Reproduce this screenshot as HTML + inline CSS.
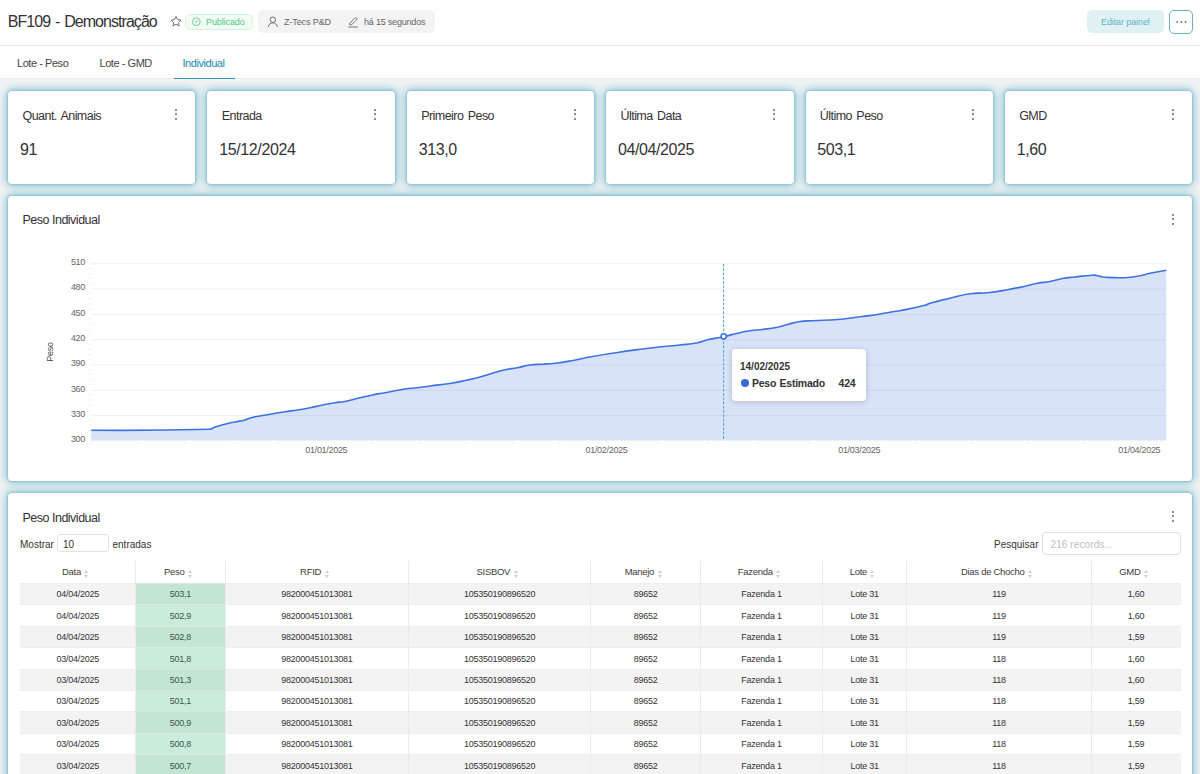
<!DOCTYPE html>
<html><head><meta charset="utf-8">
<style>
*{box-sizing:border-box;margin:0;padding:0}
html,body{width:1200px;height:774px;overflow:hidden;background:#fff;font-family:"Liberation Sans",sans-serif;color:#333}
.a{position:absolute;white-space:nowrap}
#hdr{position:absolute;left:0;top:0;width:1200px;height:46px;background:#fff;border-bottom:1px solid #e6e6e6}
#tabs{position:absolute;left:0;top:46px;width:1200px;height:32px;background:#fff;z-index:2;overflow:visible}
#main{position:absolute;left:0;top:78px;width:1200px;height:696px;background:#f1f3f3;border-top:1px solid #ededed}
.card{position:absolute;background:#fff;border-radius:4px;box-shadow:0 0 2px 1px rgba(90,170,200,.45),0 0 9px 2px rgba(60,160,195,.55)}
.dots{position:absolute;width:2px;height:12px}
.dots i{position:absolute;left:0.1px;width:2px;height:2px;background:#666;border-radius:50%}
.ctitle{position:absolute;font-size:12.5px;color:#333;letter-spacing:-0.55px;word-spacing:1.5px}
.cval{position:absolute;font-size:16px;color:#333;letter-spacing:-0.4px}
.th{display:flex;align-items:center;justify-content:center;padding-right:4px;padding-bottom:1.5px;font-size:9.5px;color:#3d3d3d;letter-spacing:-0.3px}
.si{position:relative;display:inline-block;width:5px;height:8px;margin-left:3.5px;top:3px}
.si:before{content:"";position:absolute;left:0;top:0;border-left:2.5px solid transparent;border-right:2.5px solid transparent;border-bottom:3px solid #cfcfcf}
.si:after{content:"";position:absolute;left:0;top:4.5px;border-left:2.5px solid transparent;border-right:2.5px solid transparent;border-top:3px solid #cfcfcf}
.td{text-align:center;font-size:9px;color:#333;letter-spacing:-0.25px}
.g{color:#3a5847}
</style></head><body>
<div id="hdr">
  <div class="a" style="left:7.8px;top:11px;font-size:16px;line-height:22px;color:#333;letter-spacing:-0.95px;word-spacing:1.3px">BF109 - Demonstração</div>
  <svg class="a" style="left:169px;top:15px" width="14" height="13" viewBox="0 0 14 13"><path d="M7.05 1.50 L8.58 4.60 L12.00 5.09 L9.52 7.50 L10.11 10.91 L7.05 9.30 L3.99 10.91 L4.58 7.50 L2.10 5.09 L5.52 4.60 Z" fill="none" stroke="#6e6e6e" stroke-width="1" stroke-linejoin="round"/></svg>
  <div class="a" style="left:185px;top:14px;width:68px;height:16px;border:1px solid #d3f2de;background:#f0fcf4;border-radius:5px"></div>
  <svg class="a" style="left:191px;top:16px" width="11" height="11" viewBox="0 0 11 11"><circle cx="5.3" cy="5.7" r="3.9" fill="none" stroke="#72cf9a" stroke-width="1"/><path d="M3.9 5.7 L4.9 6.5 L6.6 4.5" fill="none" stroke="#72cf9a" stroke-width="1" stroke-linecap="round" stroke-linejoin="round"/></svg>
  <div class="a" style="left:206px;top:16px;font-size:9px;line-height:12px;color:#55c585;letter-spacing:-0.1px">Publicado</div>
  <div class="a" style="left:258px;top:10px;width:177px;height:23px;background:#f3f3f3;border-radius:5px"></div>
  <svg class="a" style="left:266px;top:16px" width="14" height="12" viewBox="0 0 14 12"><circle cx="6.85" cy="3.75" r="2.75" fill="none" stroke="#707070" stroke-width="1"/><path d="M2.3 10.6 C2.9 8.2 4.6 6.8 6.85 6.8 C9.1 6.8 10.8 8.2 11.4 10.6" fill="none" stroke="#707070" stroke-width="1" stroke-linecap="round"/></svg>
  <div class="a" style="left:284px;top:16px;font-size:9px;line-height:12px;color:#666;letter-spacing:-0.1px">Z-Tecs P&amp;D</div>
  <svg class="a" style="left:347px;top:15.5px" width="12" height="13" viewBox="0 0 12 13"><path d="M2.7 8.9 L2.9 7.1 L7.9 2.1 Q8.8 1.3 9.6 2.1 Q10.4 2.9 9.6 3.8 L4.6 8.8 Z" fill="none" stroke="#777" stroke-width="1" stroke-linejoin="round"/><path d="M1.2 11 H10.8" stroke="#7a7a7a" stroke-width="1"/></svg>
  <div class="a" style="left:364px;top:16px;font-size:9px;line-height:12px;color:#666;letter-spacing:-0.2px">há 15 segundos</div>
  <div class="a" style="left:1087px;top:10px;width:77px;height:23px;background:#e1f0f2;border-radius:5px"></div>
  <div class="a" style="left:1101px;top:16px;font-size:9px;line-height:12px;color:#5eb3ca;letter-spacing:-0.1px">Editar painel</div>
  <div class="a" style="left:1169px;top:10px;width:24px;height:24px;border:1px solid #6cadc5;border-radius:5px;background:#fff"></div>
  <svg class="a" style="left:1170px;top:14px" width="22" height="16" viewBox="1170 14 22 16"><circle cx="1177.2" cy="22" r="0.95" fill="#3f7d98"/><circle cx="1181.35" cy="22" r="0.95" fill="#3f7d98"/><circle cx="1185.5" cy="22" r="0.95" fill="#3f7d98"/></svg>
</div>
<div id="tabs">
  <div class="a" style="left:17px;top:10px;font-size:11px;line-height:14px;color:#444;letter-spacing:-0.45px">Lote - Peso</div>
  <div class="a" style="left:99.5px;top:10px;font-size:11px;line-height:14px;color:#444;letter-spacing:-0.45px">Lote - GMD</div>
  <div class="a" style="left:182.5px;top:10px;font-size:11px;line-height:14px;color:#2189ab;letter-spacing:-0.45px">Individual</div>
  <div class="a" style="left:174px;top:31.6px;width:61px;height:1.7px;background:#2f97b6"></div>
</div>
<div id="main"></div>

<!-- KPI cards -->
<div class="card" style="left:7.80px;top:91px;width:187.45px;height:93px"></div>
<div class="card" style="left:207.25px;top:91px;width:187.45px;height:93px"></div>
<div class="card" style="left:406.70px;top:91px;width:187.45px;height:93px"></div>
<div class="card" style="left:606.15px;top:91px;width:187.45px;height:93px"></div>
<div class="card" style="left:805.60px;top:91px;width:187.45px;height:93px"></div>
<div class="card" style="left:1005.05px;top:91px;width:187.45px;height:93px"></div>

<div class="a ctitle" style="left:22.50px;top:108.5px;line-height:15px">Quant. Animais</div>
<div class="a cval" style="left:20.00px;top:140.5px;line-height:18px">91</div>
<div class="dots" style="left:175.00px;top:108.5px"><i style="top:0"></i><i style="top:4.65px"></i><i style="top:9.3px"></i></div>
<div class="a ctitle" style="left:221.83px;top:108.5px;line-height:15px">Entrada</div>
<div class="a cval" style="left:219.33px;top:140.5px;line-height:18px">15/12/2024</div>
<div class="dots" style="left:374.33px;top:108.5px"><i style="top:0"></i><i style="top:4.65px"></i><i style="top:9.3px"></i></div>
<div class="a ctitle" style="left:421.17px;top:108.5px;line-height:15px">Primeiro Peso</div>
<div class="a cval" style="left:418.67px;top:140.5px;line-height:18px">313,0</div>
<div class="dots" style="left:573.67px;top:108.5px"><i style="top:0"></i><i style="top:4.65px"></i><i style="top:9.3px"></i></div>
<div class="a ctitle" style="left:620.50px;top:108.5px;line-height:15px">Última Data</div>
<div class="a cval" style="left:618.00px;top:140.5px;line-height:18px">04/04/2025</div>
<div class="dots" style="left:773.00px;top:108.5px"><i style="top:0"></i><i style="top:4.65px"></i><i style="top:9.3px"></i></div>
<div class="a ctitle" style="left:819.83px;top:108.5px;line-height:15px">Último Peso</div>
<div class="a cval" style="left:817.33px;top:140.5px;line-height:18px">503,1</div>
<div class="dots" style="left:972.33px;top:108.5px"><i style="top:0"></i><i style="top:4.65px"></i><i style="top:9.3px"></i></div>
<div class="a ctitle" style="left:1019.16px;top:108.5px;line-height:15px">GMD</div>
<div class="a cval" style="left:1016.66px;top:140.5px;line-height:18px">1,60</div>
<div class="dots" style="left:1171.66px;top:108.5px"><i style="top:0"></i><i style="top:4.65px"></i><i style="top:9.3px"></i></div>
<!-- chart card -->
<div class="card" style="left:7.8px;top:196px;width:1184.7px;height:285px"></div>
<svg class="a" style="left:0;top:0;font-family:'Liberation Sans',sans-serif" width="1200" height="774" viewBox="0 0 1200 774">
<path d="M91.2 415.6 H1166.3" stroke="#f0f0f0" stroke-width="1"/>
<path d="M91.2 390.3 H1166.3" stroke="#f0f0f0" stroke-width="1"/>
<path d="M91.2 365 H1166.3" stroke="#f0f0f0" stroke-width="1"/>
<path d="M91.2 339.7 H1166.3" stroke="#f0f0f0" stroke-width="1"/>
<path d="M91.2 314.4 H1166.3" stroke="#f0f0f0" stroke-width="1"/>
<path d="M91.2 289.1 H1166.3" stroke="#f0f0f0" stroke-width="1"/>
<path d="M91.2 263.8 H1166.3" stroke="#f0f0f0" stroke-width="1"/>
<path d="M88.5 435.34 H92 M88.5 430.28 H92 M88.5 425.22 H92 M88.5 420.16 H92 M88.5 410.04 H92 M88.5 404.98 H92 M88.5 399.92 H92 M88.5 394.86 H92 M88.5 384.74 H92 M88.5 379.68 H92 M88.5 374.62 H92 M88.5 369.56 H92 M88.5 359.44 H92 M88.5 354.38 H92 M88.5 349.32 H92 M88.5 344.26 H92 M88.5 334.14 H92 M88.5 329.08 H92 M88.5 324.02 H92 M88.5 318.96 H92 M88.5 308.84 H92 M88.5 303.78 H92 M88.5 298.72 H92 M88.5 293.66 H92 M88.5 283.54 H92 M88.5 278.48 H92 M88.5 273.42 H92 M88.5 268.36 H92" stroke="#f3f3f3" stroke-width="1"/>
<path d="M91.2 440.4 V444 M138.25 440.4 V444 M185 440.4 V444 M232 440.4 V444 M278.75 440.4 V444 M325.75 440.4 V444 M372.58 440.4 V444 M419.41 440.4 V444 M466.24 440.4 V444 M513.07 440.4 V444 M559.9 440.4 V444 M606.7 440.4 V444 M657.24 440.4 V444 M707.78 440.4 V444 M758.32 440.4 V444 M808.86 440.4 V444 M859.9 440.4 V444 M916 440.4 V444 M972.1 440.4 V444 M1028.2 440.4 V444 M1084.3 440.4 V444 M1140.4 440.4 V444 M1148.9 440.4 V444 M1156.5 440.4 V444 M1161.6 440.4 V444" stroke="#f2f2f2" stroke-width="1"/>
<path d="M91.25 430.2 C91.25 430.2 150.86 430.75 210 429.2 C212.73 429.13 212.41 427.81 215 426.95 C219.91 425.31 219.97 425.46 225 424.2 C229.97 422.96 229.99 423.02 235 421.95 C239.99 420.89 240.08 421.24 245 419.95 C248.2 419.11 248.05 418.55 251.25 417.7 C255.55 416.55 255.62 416.78 260 415.95 C266.24 414.78 266.24 414.76 272.5 413.7 C278.74 412.64 278.74 412.64 285 411.7 C291.24 410.76 291.27 410.95 297.5 409.95 C303.77 408.95 303.77 408.95 310 407.7 C316.27 406.45 316.23 406.2 322.5 404.95 C328.73 403.7 328.73 403.68 335 402.7 C339.98 401.93 340.07 402.44 345 401.45 C352.57 399.94 352.48 399.48 360 397.7 C366.23 396.23 366.23 396.2 372.5 394.95 C378.73 393.7 378.76 393.85 385 392.7 C395.01 390.85 394.95 390.5 405 388.95 C411.2 388 411.26 388.45 417.5 387.7 C423.76 386.95 423.74 386.77 430 385.95 C439.99 384.64 440.06 385.04 450 383.45 C458.81 382.04 458.78 381.84 467.5 379.95 C473.78 378.59 473.8 378.62 480 376.95 C486.3 375.25 486.23 375.02 492.5 373.2 C498.73 371.39 498.67 371.09 505 369.7 C511.17 368.34 511.28 368.88 517.5 367.7 C523.78 366.51 523.68 365.83 530 364.95 C536.18 364.08 536.25 364.64 542.5 364.2 C548.75 363.76 548.78 363.94 555 363.2 C562.53 362.31 562.54 362.29 570 360.95 C581.29 358.92 581.21 358.47 592.5 356.45 C604.96 354.22 604.98 354.33 617.5 352.45 C629.98 350.58 629.99 350.62 642.5 348.95 C648.74 348.12 648.74 348.12 655 347.45 C667.49 346.12 667.52 346.35 680 344.95 C688.77 343.97 688.86 344.35 697.5 342.7 C702.61 341.72 702.42 340.86 707.5 339.7 C715.54 337.86 715.68 338.45 723.75 336.7 C730.68 335.2 730.59 334.78 737.5 333.2 C743.71 331.78 743.7 331.64 750 330.7 C756.2 329.77 756.27 330.24 762.5 329.45 C770.02 328.49 770.08 328.68 777.5 327.2 C782.58 326.18 782.48 325.73 787.5 324.45 C793.73 322.86 793.67 322.4 800 321.45 C806.17 320.52 806.25 321.03 812.5 320.7 C825 320.03 825.04 320.51 837.5 319.45 C850.04 318.38 850.01 318.01 862.5 316.45 C870.01 315.51 870.03 315.63 877.5 314.45 C885.03 313.26 884.98 312.95 892.5 311.7 C896.23 311.08 896.29 311.44 900 310.7 C912.54 308.19 912.61 308.3 925 305.2 C927.61 304.55 927.41 303.92 930 303.2 C939.91 300.42 939.97 300.58 950 298.2 C959.97 295.83 959.89 295.18 970 293.7 C978.64 292.43 978.79 293.63 987.5 292.7 C997.54 291.63 997.54 291.43 1007.5 289.7 C1016.29 288.18 1016.28 288.09 1025 286.2 C1031.28 284.84 1031.19 284.4 1037.5 283.2 C1043.69 282.02 1043.81 282.63 1050 281.45 C1056.31 280.25 1056.18 279.59 1062.5 278.45 C1068.68 277.34 1068.74 277.63 1075 276.95 C1083.74 276 1083.75 275.69 1092.5 275.2 C1095 275.06 1095.03 275.27 1097.5 275.7 C1100.03 276.14 1099.94 276.76 1102.5 276.95 C1113.69 277.76 1113.79 278.07 1125 277.7 C1132.54 277.45 1132.56 277.04 1140 275.7 C1145.06 274.79 1144.96 274.26 1150 273.2 C1158.08 271.51 1166.25 270.2 1166.25 270.2 L1166.25 440.4 L91.25 440.4 Z" fill="rgba(59,111,224,.2)"/>
<path d="M91.25 430.2 C91.25 430.2 150.86 430.75 210 429.2 C212.73 429.13 212.41 427.81 215 426.95 C219.91 425.31 219.97 425.46 225 424.2 C229.97 422.96 229.99 423.02 235 421.95 C239.99 420.89 240.08 421.24 245 419.95 C248.2 419.11 248.05 418.55 251.25 417.7 C255.55 416.55 255.62 416.78 260 415.95 C266.24 414.78 266.24 414.76 272.5 413.7 C278.74 412.64 278.74 412.64 285 411.7 C291.24 410.76 291.27 410.95 297.5 409.95 C303.77 408.95 303.77 408.95 310 407.7 C316.27 406.45 316.23 406.2 322.5 404.95 C328.73 403.7 328.73 403.68 335 402.7 C339.98 401.93 340.07 402.44 345 401.45 C352.57 399.94 352.48 399.48 360 397.7 C366.23 396.23 366.23 396.2 372.5 394.95 C378.73 393.7 378.76 393.85 385 392.7 C395.01 390.85 394.95 390.5 405 388.95 C411.2 388 411.26 388.45 417.5 387.7 C423.76 386.95 423.74 386.77 430 385.95 C439.99 384.64 440.06 385.04 450 383.45 C458.81 382.04 458.78 381.84 467.5 379.95 C473.78 378.59 473.8 378.62 480 376.95 C486.3 375.25 486.23 375.02 492.5 373.2 C498.73 371.39 498.67 371.09 505 369.7 C511.17 368.34 511.28 368.88 517.5 367.7 C523.78 366.51 523.68 365.83 530 364.95 C536.18 364.08 536.25 364.64 542.5 364.2 C548.75 363.76 548.78 363.94 555 363.2 C562.53 362.31 562.54 362.29 570 360.95 C581.29 358.92 581.21 358.47 592.5 356.45 C604.96 354.22 604.98 354.33 617.5 352.45 C629.98 350.58 629.99 350.62 642.5 348.95 C648.74 348.12 648.74 348.12 655 347.45 C667.49 346.12 667.52 346.35 680 344.95 C688.77 343.97 688.86 344.35 697.5 342.7 C702.61 341.72 702.42 340.86 707.5 339.7 C715.54 337.86 715.68 338.45 723.75 336.7 C730.68 335.2 730.59 334.78 737.5 333.2 C743.71 331.78 743.7 331.64 750 330.7 C756.2 329.77 756.27 330.24 762.5 329.45 C770.02 328.49 770.08 328.68 777.5 327.2 C782.58 326.18 782.48 325.73 787.5 324.45 C793.73 322.86 793.67 322.4 800 321.45 C806.17 320.52 806.25 321.03 812.5 320.7 C825 320.03 825.04 320.51 837.5 319.45 C850.04 318.38 850.01 318.01 862.5 316.45 C870.01 315.51 870.03 315.63 877.5 314.45 C885.03 313.26 884.98 312.95 892.5 311.7 C896.23 311.08 896.29 311.44 900 310.7 C912.54 308.19 912.61 308.3 925 305.2 C927.61 304.55 927.41 303.92 930 303.2 C939.91 300.42 939.97 300.58 950 298.2 C959.97 295.83 959.89 295.18 970 293.7 C978.64 292.43 978.79 293.63 987.5 292.7 C997.54 291.63 997.54 291.43 1007.5 289.7 C1016.29 288.18 1016.28 288.09 1025 286.2 C1031.28 284.84 1031.19 284.4 1037.5 283.2 C1043.69 282.02 1043.81 282.63 1050 281.45 C1056.31 280.25 1056.18 279.59 1062.5 278.45 C1068.68 277.34 1068.74 277.63 1075 276.95 C1083.74 276 1083.75 275.69 1092.5 275.2 C1095 275.06 1095.03 275.27 1097.5 275.7 C1100.03 276.14 1099.94 276.76 1102.5 276.95 C1113.69 277.76 1113.79 278.07 1125 277.7 C1132.54 277.45 1132.56 277.04 1140 275.7 C1145.06 274.79 1144.96 274.26 1150 273.2 C1158.08 271.51 1166.25 270.2 1166.25 270.2" fill="none" stroke="#3f72e0" stroke-width="1.65" stroke-linejoin="round"/>
<text x="85" y="442.2" text-anchor="end" font-size="9" fill="#666" letter-spacing="-0.3">300</text>
<text x="85" y="416.9" text-anchor="end" font-size="9" fill="#666" letter-spacing="-0.3">330</text>
<text x="85" y="391.6" text-anchor="end" font-size="9" fill="#666" letter-spacing="-0.3">360</text>
<text x="85" y="366.3" text-anchor="end" font-size="9" fill="#666" letter-spacing="-0.3">390</text>
<text x="85" y="341" text-anchor="end" font-size="9" fill="#666" letter-spacing="-0.3">420</text>
<text x="85" y="315.7" text-anchor="end" font-size="9" fill="#666" letter-spacing="-0.3">450</text>
<text x="85" y="290.4" text-anchor="end" font-size="9" fill="#666" letter-spacing="-0.3">480</text>
<text x="85" y="265.1" text-anchor="end" font-size="9" fill="#666" letter-spacing="-0.3">510</text>
<text x="326.3" y="453" text-anchor="middle" font-size="9" fill="#666" letter-spacing="-0.3">01/01/2025</text>
<text x="606.5" y="453" text-anchor="middle" font-size="9" fill="#666" letter-spacing="-0.3">01/02/2025</text>
<text x="859.2" y="453" text-anchor="middle" font-size="9" fill="#666" letter-spacing="-0.3">01/03/2025</text>
<text x="1139.3" y="453" text-anchor="middle" font-size="9" fill="#666" letter-spacing="-0.3">01/04/2025</text>
<text transform="translate(53 352) rotate(-90)" text-anchor="middle" font-size="9" fill="#444" letter-spacing="-0.3">Peso</text>
<path d="M723.6 264 V440.4" stroke="#4aa8c6" stroke-width="1" stroke-dasharray="2.8 1.5"/>
<circle cx="723.65" cy="336.3" r="2.6" fill="#fff" stroke="#3a6ee0" stroke-width="1.5"/>
</svg>
<div class="a" style="left:22.5px;top:213px;font-size:12.5px;line-height:15px;color:#333;letter-spacing:-0.5px">Peso Individual</div>
<div class="dots" style="left:1172px;top:213.5px"><i style="top:0"></i><i style="top:4.65px"></i><i style="top:9.3px"></i></div>
<div class="a" style="left:732px;top:349px;width:134px;height:52px;background:#fff;border-radius:4px;box-shadow:0 1px 6px rgba(0,0,0,.18)"></div>
<div class="a" style="left:740px;top:359.75px;font-size:10px;line-height:13px;font-weight:bold;color:#333">14/02/2025</div>
<div class="a" style="left:741px;top:379px;width:8px;height:8px;border-radius:50%;background:#3b68d6"></div>
<div class="a" style="left:752px;top:376.75px;font-size:10.5px;line-height:13px;font-weight:bold;color:#333;letter-spacing:-0.25px;word-spacing:0.8px">Peso Estimado</div>
<div class="a" style="left:838.5px;top:376.75px;font-size:10.5px;line-height:13px;font-weight:bold;color:#333;letter-spacing:-0.2px">424</div>

<!-- table card -->
<div class="card" style="left:7.8px;top:493px;width:1184.7px;height:320px"></div>

<div class="a" style="left:22.5px;top:510.5px;font-size:12.5px;line-height:15px;color:#333;letter-spacing:-0.5px">Peso Individual</div>
<div class="dots" style="left:1172px;top:510.5px"><i style="top:0"></i><i style="top:4.65px"></i><i style="top:9.3px"></i></div>
<div class="a" style="left:20px;top:537.5px;font-size:10px;line-height:13px;color:#333">Mostrar</div>
<div class="a" style="left:57px;top:534px;width:52px;height:17.5px;border:1px solid #e2e2e2;border-radius:3px;background:#fff"></div>
<div class="a" style="left:63px;top:537.5px;font-size:10px;line-height:13px;color:#333">10</div>
<div class="a" style="left:112.5px;top:537.5px;font-size:10px;line-height:13px;color:#333">entradas</div>
<div class="a" style="left:994px;top:537.5px;font-size:10px;line-height:13px;color:#333">Pesquisar</div>
<div class="a" style="left:1042px;top:531.5px;width:139px;height:23px;border:1px solid #e0e0e0;border-radius:4px;background:#fff"></div>
<div class="a" style="left:1050.5px;top:537.5px;font-size:10px;line-height:13px;color:#bdbdbd;letter-spacing:0.1px">216 records...</div>
<div class="a" style="left:20px;top:583.00px;width:1161.00px;height:21.41px;background:#f3f3f3;border-top:1px solid #ededed"></div>
<div class="a" style="left:136.00px;top:583.00px;width:89.40px;height:21.41px;background:#c4e5d4;border-top:1px solid #dbe9e1"></div>
<div class="a" style="left:20px;top:604.41px;width:1161.00px;height:21.41px;background:#ffffff;border-top:1px solid #ededed"></div>
<div class="a" style="left:136.00px;top:604.41px;width:89.40px;height:21.41px;background:#cbebdb;border-top:1px solid #dbe9e1"></div>
<div class="a" style="left:20px;top:625.82px;width:1161.00px;height:21.41px;background:#f3f3f3;border-top:1px solid #ededed"></div>
<div class="a" style="left:136.00px;top:625.82px;width:89.40px;height:21.41px;background:#c4e5d4;border-top:1px solid #dbe9e1"></div>
<div class="a" style="left:20px;top:647.23px;width:1161.00px;height:21.41px;background:#ffffff;border-top:1px solid #ededed"></div>
<div class="a" style="left:136.00px;top:647.23px;width:89.40px;height:21.41px;background:#cbebdb;border-top:1px solid #dbe9e1"></div>
<div class="a" style="left:20px;top:668.64px;width:1161.00px;height:21.41px;background:#f3f3f3;border-top:1px solid #ededed"></div>
<div class="a" style="left:136.00px;top:668.64px;width:89.40px;height:21.41px;background:#c4e5d4;border-top:1px solid #dbe9e1"></div>
<div class="a" style="left:20px;top:690.05px;width:1161.00px;height:21.41px;background:#ffffff;border-top:1px solid #ededed"></div>
<div class="a" style="left:136.00px;top:690.05px;width:89.40px;height:21.41px;background:#cbebdb;border-top:1px solid #dbe9e1"></div>
<div class="a" style="left:20px;top:711.46px;width:1161.00px;height:21.41px;background:#f3f3f3;border-top:1px solid #ededed"></div>
<div class="a" style="left:136.00px;top:711.46px;width:89.40px;height:21.41px;background:#c4e5d4;border-top:1px solid #dbe9e1"></div>
<div class="a" style="left:20px;top:732.87px;width:1161.00px;height:21.41px;background:#ffffff;border-top:1px solid #ededed"></div>
<div class="a" style="left:136.00px;top:732.87px;width:89.40px;height:21.41px;background:#cbebdb;border-top:1px solid #dbe9e1"></div>
<div class="a" style="left:20px;top:754.28px;width:1161.00px;height:21.41px;background:#f3f3f3;border-top:1px solid #ededed"></div>
<div class="a" style="left:136.00px;top:754.28px;width:89.40px;height:21.41px;background:#c4e5d4;border-top:1px solid #dbe9e1"></div>
<div class="a" style="left:20px;top:775.69px;width:1161.00px;height:21.41px;background:#ffffff;border-top:1px solid #ededed"></div>
<div class="a" style="left:136.00px;top:775.69px;width:89.40px;height:21.41px;background:#cbebdb;border-top:1px solid #dbe9e1"></div>
<div class="a" style="left:135.00px;top:561px;width:1px;height:213px;background:#ebebeb"></div>
<div class="a" style="left:224.90px;top:561px;width:1px;height:213px;background:#ebebeb"></div>
<div class="a" style="left:407.80px;top:561px;width:1px;height:213px;background:#ebebeb"></div>
<div class="a" style="left:590.30px;top:561px;width:1px;height:213px;background:#ebebeb"></div>
<div class="a" style="left:700.00px;top:561px;width:1px;height:213px;background:#ebebeb"></div>
<div class="a" style="left:822.00px;top:561px;width:1px;height:213px;background:#ebebeb"></div>
<div class="a" style="left:906.20px;top:561px;width:1px;height:213px;background:#ebebeb"></div>
<div class="a" style="left:1090.75px;top:561px;width:1px;height:213px;background:#ebebeb"></div>
<div class="a th" style="left:20.00px;width:115.50px;top:561px;height:22px"><span>Data</span><b class="si"></b></div>
<div class="a th" style="left:135.50px;width:89.90px;top:561px;height:22px"><span>Peso</span><b class="si"></b></div>
<div class="a th" style="left:225.40px;width:182.90px;top:561px;height:22px"><span>RFID</span><b class="si"></b></div>
<div class="a th" style="left:408.30px;width:182.50px;top:561px;height:22px"><span>SISBOV</span><b class="si"></b></div>
<div class="a th" style="left:590.80px;width:109.70px;top:561px;height:22px"><span>Manejo</span><b class="si"></b></div>
<div class="a th" style="left:700.50px;width:122.00px;top:561px;height:22px"><span>Fazenda</span><b class="si"></b></div>
<div class="a th" style="left:822.50px;width:84.20px;top:561px;height:22px"><span>Lote</span><b class="si"></b></div>
<div class="a th" style="left:906.70px;width:184.55px;top:561px;height:22px"><span>Dias de Chocho</span><b class="si"></b></div>
<div class="a th" style="left:1091.25px;width:89.75px;top:561px;height:22px"><span>GMD</span><b class="si"></b></div>
<div class="a td" style="left:20.00px;width:115.50px;top:584.30px;height:20.41px;line-height:20.41px">04/04/2025</div>
<div class="a td g" style="left:135.50px;width:89.90px;top:584.30px;height:20.41px;line-height:20.41px">503,1</div>
<div class="a td" style="left:225.40px;width:182.90px;top:584.30px;height:20.41px;line-height:20.41px">982000451013081</div>
<div class="a td" style="left:408.30px;width:182.50px;top:584.30px;height:20.41px;line-height:20.41px">105350190896520</div>
<div class="a td" style="left:590.80px;width:109.70px;top:584.30px;height:20.41px;line-height:20.41px">89652</div>
<div class="a td" style="left:700.50px;width:122.00px;top:584.30px;height:20.41px;line-height:20.41px">Fazenda 1</div>
<div class="a td" style="left:822.50px;width:84.20px;top:584.30px;height:20.41px;line-height:20.41px">Lote 31</div>
<div class="a td" style="left:906.70px;width:184.55px;top:584.30px;height:20.41px;line-height:20.41px">119</div>
<div class="a td" style="left:1091.25px;width:89.75px;top:584.30px;height:20.41px;line-height:20.41px">1,60</div>
<div class="a td" style="left:20.00px;width:115.50px;top:605.71px;height:20.41px;line-height:20.41px">04/04/2025</div>
<div class="a td g" style="left:135.50px;width:89.90px;top:605.71px;height:20.41px;line-height:20.41px">502,9</div>
<div class="a td" style="left:225.40px;width:182.90px;top:605.71px;height:20.41px;line-height:20.41px">982000451013081</div>
<div class="a td" style="left:408.30px;width:182.50px;top:605.71px;height:20.41px;line-height:20.41px">105350190896520</div>
<div class="a td" style="left:590.80px;width:109.70px;top:605.71px;height:20.41px;line-height:20.41px">89652</div>
<div class="a td" style="left:700.50px;width:122.00px;top:605.71px;height:20.41px;line-height:20.41px">Fazenda 1</div>
<div class="a td" style="left:822.50px;width:84.20px;top:605.71px;height:20.41px;line-height:20.41px">Lote 31</div>
<div class="a td" style="left:906.70px;width:184.55px;top:605.71px;height:20.41px;line-height:20.41px">119</div>
<div class="a td" style="left:1091.25px;width:89.75px;top:605.71px;height:20.41px;line-height:20.41px">1,60</div>
<div class="a td" style="left:20.00px;width:115.50px;top:627.12px;height:20.41px;line-height:20.41px">04/04/2025</div>
<div class="a td g" style="left:135.50px;width:89.90px;top:627.12px;height:20.41px;line-height:20.41px">502,8</div>
<div class="a td" style="left:225.40px;width:182.90px;top:627.12px;height:20.41px;line-height:20.41px">982000451013081</div>
<div class="a td" style="left:408.30px;width:182.50px;top:627.12px;height:20.41px;line-height:20.41px">105350190896520</div>
<div class="a td" style="left:590.80px;width:109.70px;top:627.12px;height:20.41px;line-height:20.41px">89652</div>
<div class="a td" style="left:700.50px;width:122.00px;top:627.12px;height:20.41px;line-height:20.41px">Fazenda 1</div>
<div class="a td" style="left:822.50px;width:84.20px;top:627.12px;height:20.41px;line-height:20.41px">Lote 31</div>
<div class="a td" style="left:906.70px;width:184.55px;top:627.12px;height:20.41px;line-height:20.41px">119</div>
<div class="a td" style="left:1091.25px;width:89.75px;top:627.12px;height:20.41px;line-height:20.41px">1,59</div>
<div class="a td" style="left:20.00px;width:115.50px;top:648.53px;height:20.41px;line-height:20.41px">03/04/2025</div>
<div class="a td g" style="left:135.50px;width:89.90px;top:648.53px;height:20.41px;line-height:20.41px">501,8</div>
<div class="a td" style="left:225.40px;width:182.90px;top:648.53px;height:20.41px;line-height:20.41px">982000451013081</div>
<div class="a td" style="left:408.30px;width:182.50px;top:648.53px;height:20.41px;line-height:20.41px">105350190896520</div>
<div class="a td" style="left:590.80px;width:109.70px;top:648.53px;height:20.41px;line-height:20.41px">89652</div>
<div class="a td" style="left:700.50px;width:122.00px;top:648.53px;height:20.41px;line-height:20.41px">Fazenda 1</div>
<div class="a td" style="left:822.50px;width:84.20px;top:648.53px;height:20.41px;line-height:20.41px">Lote 31</div>
<div class="a td" style="left:906.70px;width:184.55px;top:648.53px;height:20.41px;line-height:20.41px">118</div>
<div class="a td" style="left:1091.25px;width:89.75px;top:648.53px;height:20.41px;line-height:20.41px">1,60</div>
<div class="a td" style="left:20.00px;width:115.50px;top:669.94px;height:20.41px;line-height:20.41px">03/04/2025</div>
<div class="a td g" style="left:135.50px;width:89.90px;top:669.94px;height:20.41px;line-height:20.41px">501,3</div>
<div class="a td" style="left:225.40px;width:182.90px;top:669.94px;height:20.41px;line-height:20.41px">982000451013081</div>
<div class="a td" style="left:408.30px;width:182.50px;top:669.94px;height:20.41px;line-height:20.41px">105350190896520</div>
<div class="a td" style="left:590.80px;width:109.70px;top:669.94px;height:20.41px;line-height:20.41px">89652</div>
<div class="a td" style="left:700.50px;width:122.00px;top:669.94px;height:20.41px;line-height:20.41px">Fazenda 1</div>
<div class="a td" style="left:822.50px;width:84.20px;top:669.94px;height:20.41px;line-height:20.41px">Lote 31</div>
<div class="a td" style="left:906.70px;width:184.55px;top:669.94px;height:20.41px;line-height:20.41px">118</div>
<div class="a td" style="left:1091.25px;width:89.75px;top:669.94px;height:20.41px;line-height:20.41px">1,60</div>
<div class="a td" style="left:20.00px;width:115.50px;top:691.35px;height:20.41px;line-height:20.41px">03/04/2025</div>
<div class="a td g" style="left:135.50px;width:89.90px;top:691.35px;height:20.41px;line-height:20.41px">501,1</div>
<div class="a td" style="left:225.40px;width:182.90px;top:691.35px;height:20.41px;line-height:20.41px">982000451013081</div>
<div class="a td" style="left:408.30px;width:182.50px;top:691.35px;height:20.41px;line-height:20.41px">105350190896520</div>
<div class="a td" style="left:590.80px;width:109.70px;top:691.35px;height:20.41px;line-height:20.41px">89652</div>
<div class="a td" style="left:700.50px;width:122.00px;top:691.35px;height:20.41px;line-height:20.41px">Fazenda 1</div>
<div class="a td" style="left:822.50px;width:84.20px;top:691.35px;height:20.41px;line-height:20.41px">Lote 31</div>
<div class="a td" style="left:906.70px;width:184.55px;top:691.35px;height:20.41px;line-height:20.41px">118</div>
<div class="a td" style="left:1091.25px;width:89.75px;top:691.35px;height:20.41px;line-height:20.41px">1,59</div>
<div class="a td" style="left:20.00px;width:115.50px;top:712.76px;height:20.41px;line-height:20.41px">03/04/2025</div>
<div class="a td g" style="left:135.50px;width:89.90px;top:712.76px;height:20.41px;line-height:20.41px">500,9</div>
<div class="a td" style="left:225.40px;width:182.90px;top:712.76px;height:20.41px;line-height:20.41px">982000451013081</div>
<div class="a td" style="left:408.30px;width:182.50px;top:712.76px;height:20.41px;line-height:20.41px">105350190896520</div>
<div class="a td" style="left:590.80px;width:109.70px;top:712.76px;height:20.41px;line-height:20.41px">89652</div>
<div class="a td" style="left:700.50px;width:122.00px;top:712.76px;height:20.41px;line-height:20.41px">Fazenda 1</div>
<div class="a td" style="left:822.50px;width:84.20px;top:712.76px;height:20.41px;line-height:20.41px">Lote 31</div>
<div class="a td" style="left:906.70px;width:184.55px;top:712.76px;height:20.41px;line-height:20.41px">118</div>
<div class="a td" style="left:1091.25px;width:89.75px;top:712.76px;height:20.41px;line-height:20.41px">1,59</div>
<div class="a td" style="left:20.00px;width:115.50px;top:734.17px;height:20.41px;line-height:20.41px">03/04/2025</div>
<div class="a td g" style="left:135.50px;width:89.90px;top:734.17px;height:20.41px;line-height:20.41px">500,8</div>
<div class="a td" style="left:225.40px;width:182.90px;top:734.17px;height:20.41px;line-height:20.41px">982000451013081</div>
<div class="a td" style="left:408.30px;width:182.50px;top:734.17px;height:20.41px;line-height:20.41px">105350190896520</div>
<div class="a td" style="left:590.80px;width:109.70px;top:734.17px;height:20.41px;line-height:20.41px">89652</div>
<div class="a td" style="left:700.50px;width:122.00px;top:734.17px;height:20.41px;line-height:20.41px">Fazenda 1</div>
<div class="a td" style="left:822.50px;width:84.20px;top:734.17px;height:20.41px;line-height:20.41px">Lote 31</div>
<div class="a td" style="left:906.70px;width:184.55px;top:734.17px;height:20.41px;line-height:20.41px">118</div>
<div class="a td" style="left:1091.25px;width:89.75px;top:734.17px;height:20.41px;line-height:20.41px">1,59</div>
<div class="a td" style="left:20.00px;width:115.50px;top:755.58px;height:20.41px;line-height:20.41px">03/04/2025</div>
<div class="a td g" style="left:135.50px;width:89.90px;top:755.58px;height:20.41px;line-height:20.41px">500,7</div>
<div class="a td" style="left:225.40px;width:182.90px;top:755.58px;height:20.41px;line-height:20.41px">982000451013081</div>
<div class="a td" style="left:408.30px;width:182.50px;top:755.58px;height:20.41px;line-height:20.41px">105350190896520</div>
<div class="a td" style="left:590.80px;width:109.70px;top:755.58px;height:20.41px;line-height:20.41px">89652</div>
<div class="a td" style="left:700.50px;width:122.00px;top:755.58px;height:20.41px;line-height:20.41px">Fazenda 1</div>
<div class="a td" style="left:822.50px;width:84.20px;top:755.58px;height:20.41px;line-height:20.41px">Lote 31</div>
<div class="a td" style="left:906.70px;width:184.55px;top:755.58px;height:20.41px;line-height:20.41px">118</div>
<div class="a td" style="left:1091.25px;width:89.75px;top:755.58px;height:20.41px;line-height:20.41px">1,59</div>
<div class="a td" style="left:20.00px;width:115.50px;top:776.99px;height:20.41px;line-height:20.41px">03/04/2025</div>
<div class="a td g" style="left:135.50px;width:89.90px;top:776.99px;height:20.41px;line-height:20.41px">500,6</div>
<div class="a td" style="left:225.40px;width:182.90px;top:776.99px;height:20.41px;line-height:20.41px">982000451013081</div>
<div class="a td" style="left:408.30px;width:182.50px;top:776.99px;height:20.41px;line-height:20.41px">105350190896520</div>
<div class="a td" style="left:590.80px;width:109.70px;top:776.99px;height:20.41px;line-height:20.41px">89652</div>
<div class="a td" style="left:700.50px;width:122.00px;top:776.99px;height:20.41px;line-height:20.41px">Fazenda 1</div>
<div class="a td" style="left:822.50px;width:84.20px;top:776.99px;height:20.41px;line-height:20.41px">Lote 31</div>
<div class="a td" style="left:906.70px;width:184.55px;top:776.99px;height:20.41px;line-height:20.41px">118</div>
<div class="a td" style="left:1091.25px;width:89.75px;top:776.99px;height:20.41px;line-height:20.41px">1,59</div>
</body></html>
